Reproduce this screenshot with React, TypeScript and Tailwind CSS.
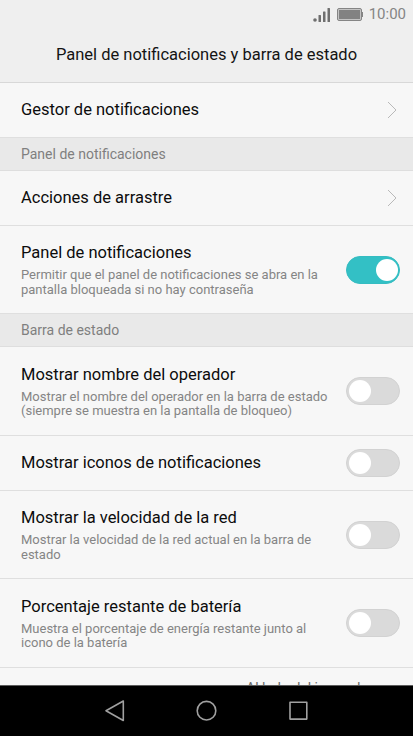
import { useState } from "react";
import { clsx } from "clsx";

interface SettingRowProps {
  title: string;
  /** Lines of the grey summary, broken as the panel breaks them */
  summary?: string[];
  className?: string;
  children?: React.ReactNode;
}

function SettingRow({ title, summary, className, children }: SettingRowProps) {
  return (
    <div
      className={clsx(
        "flex items-center justify-between border-b border-[#dfdfdf] pl-[21px] pr-[13px] shrink-0",
        className,
      )}
    >
      <div className="min-w-0 whitespace-nowrap">
        <div className="text-[16.5px] leading-[22px] text-[#0c0c0c]">{title}</div>
        {summary && (
          <div className="mt-[4px] text-[13px] leading-[14.5px] text-[#858585]">
            {summary.map((line) => (
              <div key={line}>{line}</div>
            ))}
          </div>
        )}
      </div>
      {children}
    </div>
  );
}

function SectionHeader({ label, className }: { label: string; className: string }) {
  return (
    <h2
      className={clsx(
        "flex items-center border-b border-[#dedede] bg-[#e9e9e9] pl-[21px] text-[14px] text-[#7f7f7f] shrink-0",
        className,
      )}
    >
      {label}
    </h2>
  );
}

function Toggle({ label, defaultOn = false }: { label: string; defaultOn?: boolean }) {
  const [on, setOn] = useState(defaultOn);

  return (
    <button
      role="switch"
      aria-checked={on}
      aria-label={label}
      onClick={() => setOn(!on)}
      className={clsx(
        "flex h-7 w-[54px] shrink-0 items-center rounded-full border px-[1.5px]",
        on ? "justify-end border-[#35bcc1] bg-[#33c0c5]" : "justify-start border-[#d2d2d2] bg-[#dadada]",
      )}
    >
      <span className="h-[22px] w-[22px] rounded-full bg-white" />
    </button>
  );
}

function Chevron() {
  return (
    <svg width="10" height="18" viewBox="0 0 10 18" fill="none" className="mr-[3px] shrink-0">
      <path d="M1 1l8 8-8 8" stroke="#b9b9b9" strokeWidth="1" />
    </svg>
  );
}

function StatusBar() {
  return (
    <div className="flex h-[29px] items-center justify-end pr-[7px] text-[15px] text-[#858585]">
      {/* Signal */}
      <svg width="18" height="14" viewBox="0 0 18 14" fill="#6f6f6f" className="mr-[6px]">
        <circle cx="2" cy="12" r="1.8" />
        <rect x="5.5" y="7" width="2.5" height="7" rx="0.5" />
        <rect x="10" y="3.5" width="2.5" height="10.5" rx="0.5" />
        <rect x="14.5" y="0" width="2.5" height="14" rx="0.5" />
      </svg>
      {/* Battery */}
      <svg width="26" height="13" viewBox="0 0 26 13" className="mr-[6px]">
        <rect x="0.5" y="0.5" width="24" height="12" rx="1.5" fill="#c4c4c4" stroke="#858585" />
        <rect x="2" y="2" width="21" height="9" fill="#828282" />
        <rect x="24.5" y="4" width="1.5" height="5" fill="#858585" />
      </svg>
      <span>10:00</span>
    </div>
  );
}

function NavBar() {
  return (
    <nav className="flex h-[51px] shrink-0 items-center justify-center border-t border-[#5c5c5c] bg-black">
      <svg width="413" height="50" viewBox="0 0 413 50" fill="none" stroke="#a0a0a0" strokeWidth="1.6" strokeLinejoin="round">
        <path d="M106 24.7L123.3 15v19.5z" />
        <circle cx="206.5" cy="24.7" r="9.3" />
        <rect x="290" y="16.3" width="16.8" height="16.8" />
      </svg>
    </nav>
  );
}

export default function App() {
  return (
    <div className="flex h-[736px] w-[413px] flex-col overflow-hidden bg-[#f7f7f7] font-['Roboto',sans-serif]">
      <header className="h-[83px] shrink-0 border-b border-[#d8d8d8] bg-[#efefef]">
        <StatusBar />
        <h1 className="flex h-[53px] items-center justify-center text-[16.5px] text-[#141414]">
          Panel de notificaciones y barra de estado
        </h1>
      </header>

      <main className="flex min-h-0 flex-1 flex-col overflow-hidden">
        <SettingRow title="Gestor de notificaciones" className="h-[55px]">
          <Chevron />
        </SettingRow>

        <SectionHeader label="Panel de notificaciones" className="h-[33px]" />
        <SettingRow title="Acciones de arrastre" className="h-[55px]">
          <Chevron />
        </SettingRow>
        <SettingRow
          title="Panel de notificaciones"
          summary={["Permitir que el panel de notificaciones se abra en la", "pantalla bloqueada si no hay contraseña"]}
          className="h-[88px]"
        >
          <Toggle label="Panel de notificaciones" defaultOn />
        </SettingRow>

        <SectionHeader label="Barra de estado" className="h-[33px]" />
        <SettingRow
          title="Mostrar nombre del operador"
          summary={["Mostrar el nombre del operador en la barra de estado", "(siempre se muestra en la pantalla de bloqueo)"]}
          className="h-[89px]"
        >
          <Toggle label="Mostrar nombre del operador" />
        </SettingRow>
        <SettingRow title="Mostrar iconos de notificaciones" className="h-[55px]">
          <Toggle label="Mostrar iconos de notificaciones" />
        </SettingRow>
        <SettingRow
          title="Mostrar la velocidad de la red"
          summary={["Mostrar la velocidad de la red actual en la barra de", "estado"]}
          className="h-[88px]"
        >
          <Toggle label="Mostrar la velocidad de la red" />
        </SettingRow>
        <SettingRow
          title="Porcentaje restante de batería"
          summary={["Muestra el porcentaje de energía restante junto al", "icono de la batería"]}
          className="h-[89px]"
        >
          <Toggle label="Porcentaje restante de batería" />
        </SettingRow>

        {/* Next row, cut off by the navigation bar */}
        <div className="shrink-0 pl-[246px] pt-[11px] text-[14px] leading-[18px] text-[#6a6a6a]">
          Al lado del icono de
        </div>
      </main>

      <NavBar />
    </div>
  );
}
